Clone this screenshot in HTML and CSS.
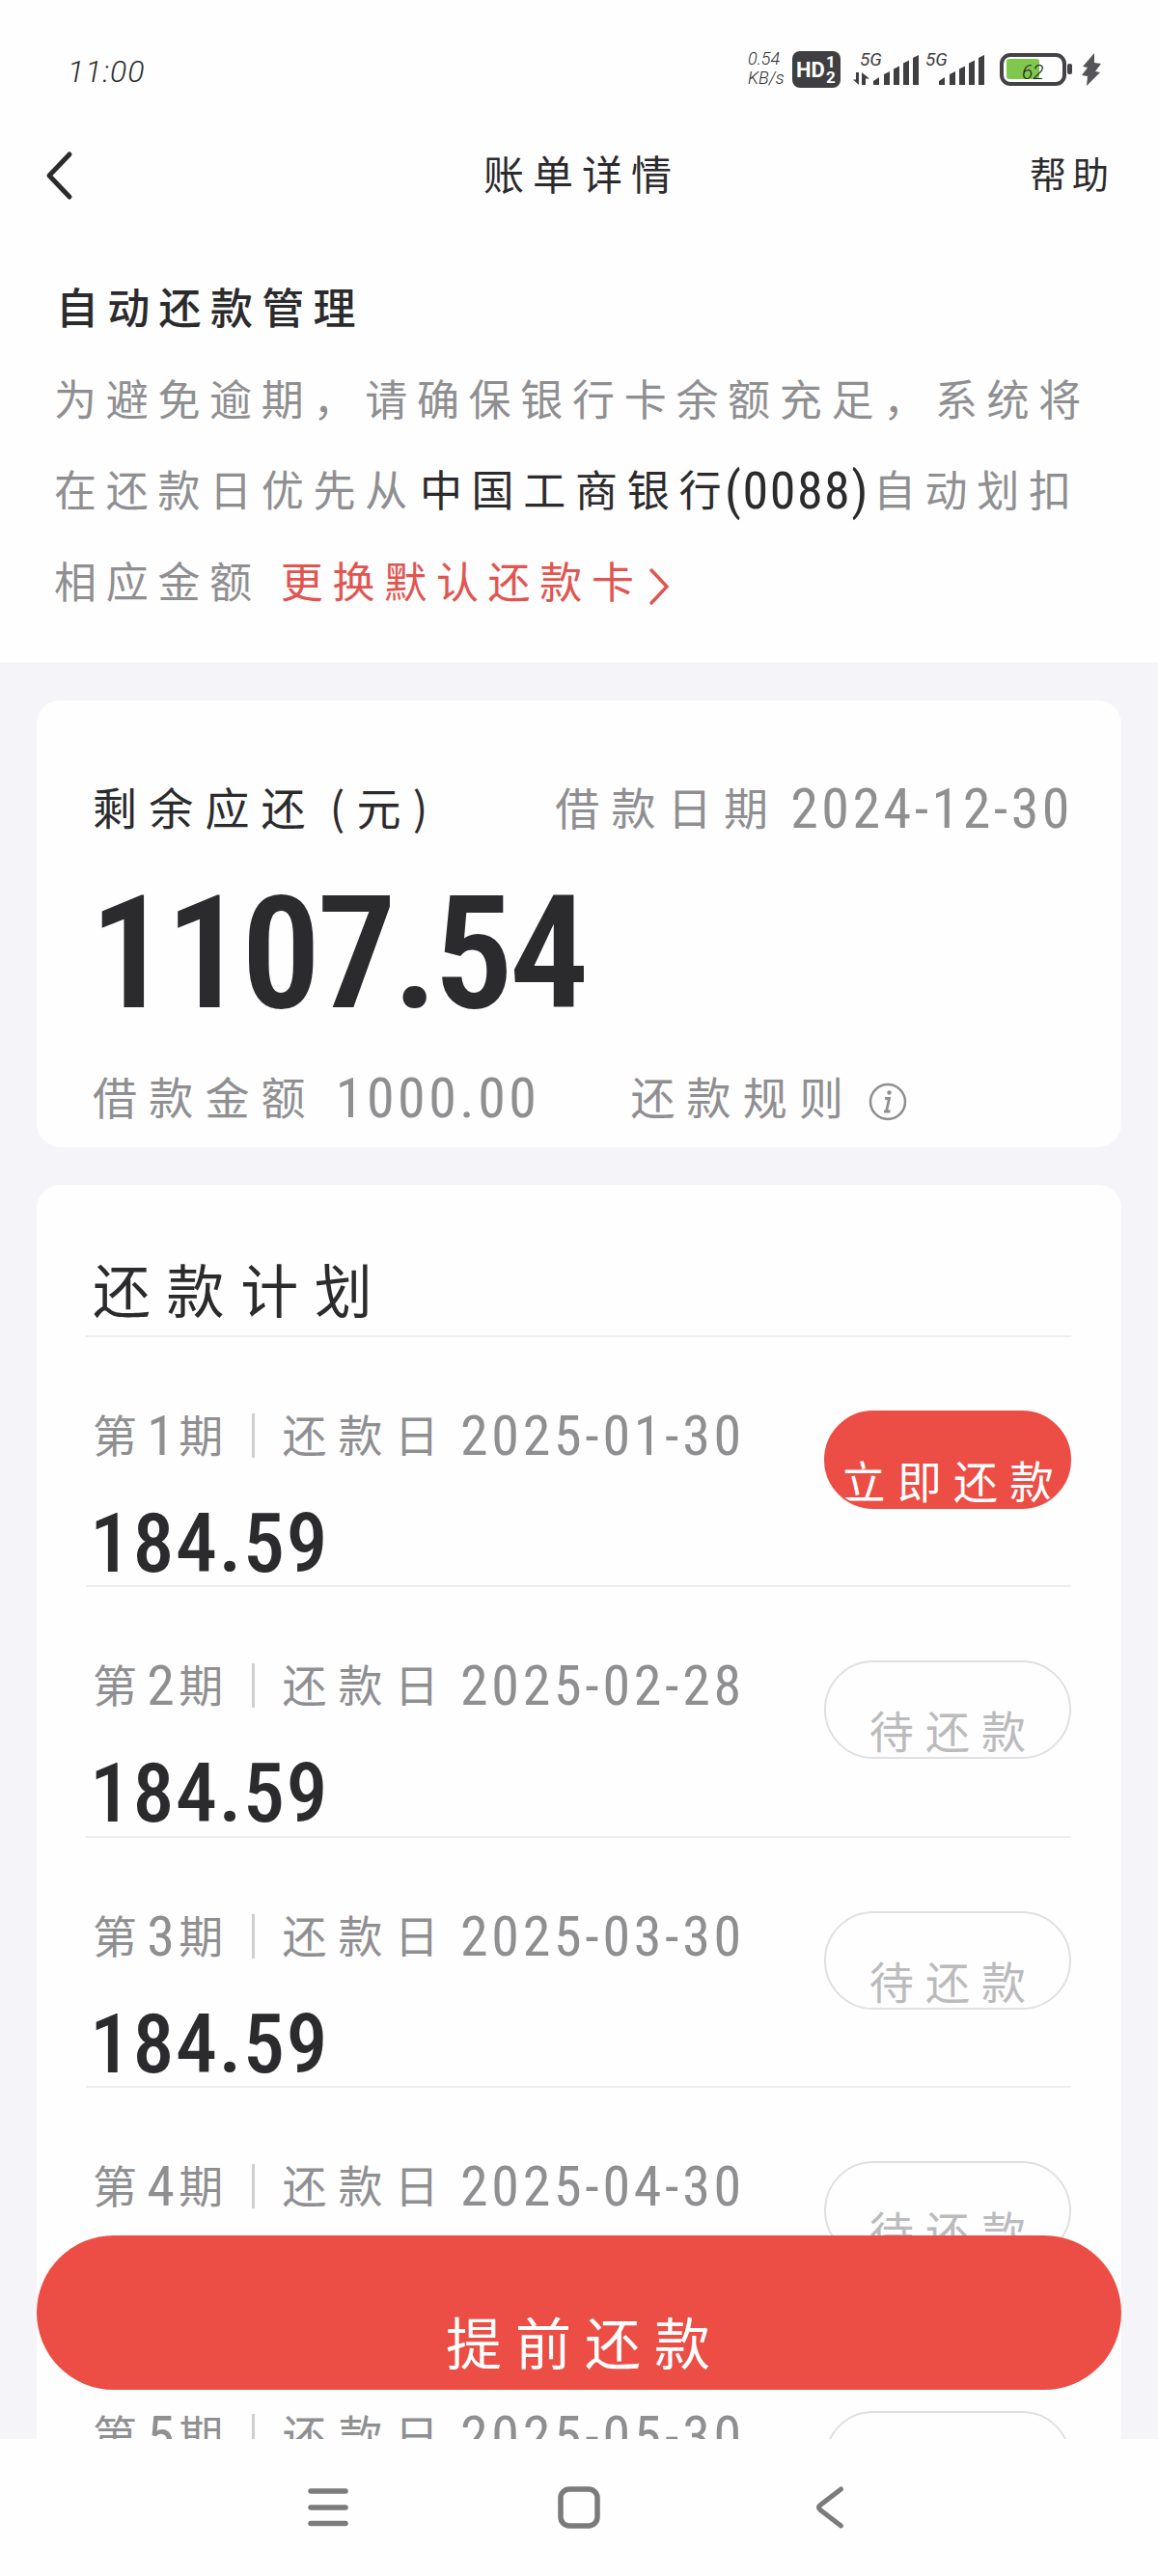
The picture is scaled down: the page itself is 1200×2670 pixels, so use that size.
FILE: index.html
```html
<!DOCTYPE html>
<html lang="zh-CN">
<head>
    <meta charset="UTF-8">
    <title>账单详情</title>
    <link rel="stylesheet" href="styles.css">
</head>
<body>

    <div class="screen">
        <div class="status-bar">
            <div class="time">11:00</div>
            <div class="speed"><span>0.54</span><span>KB/s</span></div>
            <div class="hd-badge">
                <span class="hd-text">HD</span>
                <span class="hd-sims"><span>1</span><span>2</span></span>
            </div>
            <svg class="signals" width="141" height="38" viewBox="0 0 141 38">
                <g fill="#3f3f41">
                    <path d="M3 22h3v13L0 29.500h3zM9 35V22l8 6.500h-4V35z"/>
                    <path d="M21 35v-4l6-4v8zM32 35V24l6-3v14zM42 35V18.500l6-3V35zM52 35V12.500l6-3V35zM62 35V7l6-3v31z"/>
                    <path d="M89 35v-4l6-4v8zM100 35V24l6-3v14zM110 35V18.500l6-3V35zM120 35V12.500l6-3V35zM130 35V7l6-3v31z"/>
                    <text class="net" x="7" y="15">5G</text>
                    <text class="net" x="75" y="15">5G</text>
                </g>
            </svg>
            <svg class="battery" width="76" height="36" viewBox="0 0 76 36">
                <rect x="2" y="3" width="65" height="30" rx="9" fill="none" stroke="#454247" stroke-width="4"/>
                <rect x="7" y="7" width="34" height="21" rx="3" fill="#7fc74d"/>
                <rect x="70" y="12" width="5" height="11" rx="2" fill="#454247"/>
                <text class="level" x="23" y="28">62</text>
            </svg>
            <svg class="bolt" width="22" height="36" viewBox="0 0 22 36">
                <path d="M14 1 2 15l5 1-6 8 6 1-1 10L20 21l-5-1 6-8-7-1z" fill="#555557"/>
            </svg>
        </div>

        <div class="header">
            <svg class="back" width="30" height="52" viewBox="0 0 30 52">
                <path d="M25 4 4 26l21 22" fill="none" stroke="#2b2b2d" stroke-width="5" stroke-linecap="round" stroke-linejoin="round"/>
            </svg>
            <h1 class="page-title">账单详情</h1>
            <a class="help">帮助</a>
        </div>

        <div class="auto-pay">
            <h2>自动还款管理</h2>
            <p>为避免逾期，请确保银行卡余额充足，系统将<br>在还款日优先从<b>中国工商银行<span class="card-no">(0088)</span></b>自动划扣<br>相应金额<a class="change-card">更换默认还款卡<svg width="22" height="40" viewBox="0 0 22 40"><path d="M3 3l16 17L3 37" fill="none" stroke="#e15550" stroke-width="3.500" stroke-linecap="round"/></svg></a></p>
        </div>

        <div class="content">
            <div class="card summary">
                <div class="summary-top">
                    <span class="label dark">剩余应还<span class="unit">(元)</span></span>
                    <span class="label">借款日期<span class="num loan-date">2024-12-30</span></span>
                </div>
                <div class="total">1107.54</div>
                <div class="summary-bottom">
                    <span class="label">借款金额<span class="num loan">1000.00</span></span>
                    <span class="label rule">还款规则</span>
                    <svg class="info" width="42" height="42" viewBox="0 0 42 42">
                        <circle cx="21" cy="21" r="18" fill="none" stroke="#8f8f92" stroke-width="2.500"/>
                        <circle cx="22.500" cy="11.500" r="2.200" fill="#8f8f92"/>
                        <path d="M18 17.500h4.500l-3 13.500h4M17 31h3" fill="none" stroke="#8f8f92" stroke-width="2.800"/>
                    </svg>
                </div>
            </div>

            <div class="card plan">
                <h2>还款计划</h2>
                <div id="planList"></div>
            </div>

            <button class="prepay">提前还款</button>
        </div>

        <div class="nav-bar">
            <svg width="48" height="48" viewBox="0 0 48 48">
                <path d="M6 7h36M6 24h36M6 40.500h36" stroke="#7b7b7b" stroke-width="5.500" stroke-linecap="round"/>
            </svg>
            <svg width="48" height="48" viewBox="0 0 48 48">
                <rect x="5" y="5" width="38" height="38" rx="9" fill="none" stroke="#7b7b7b" stroke-width="5.500"/>
            </svg>
            <svg width="48" height="48" viewBox="0 0 48 48">
                <path d="M35.500 5 14 21.500q-3 2.500 0 5L35.500 43" fill="none" stroke="#7b7b7b" stroke-width="5" stroke-linecap="round"/>
            </svg>
        </div>
    </div>

    <script>
        const plan = [
            { date: '2025-01-30', amount: '184.59', due: true },
            { date: '2025-02-28', amount: '184.59' },
            { date: '2025-03-30', amount: '184.59' },
            { date: '2025-04-30', amount: '184.59' },
            { date: '2025-05-30', amount: '184.59' }
        ];

        function renderPlan() {
            const list = document.getElementById('planList');
            plan.forEach((item, index) => {
                const row = document.createElement('div');
                row.className = 'plan-row';
                row.innerHTML = `
                    <div class="plan-info">
                        <div class="label">第<span class="num period">${index + 1}</span>期<i class="bar"></i>还款日<span class="num date">${item.date}</span></div>
                        <div class="amount">${item.amount}</div>
                    </div>
                    <button class="pay ${item.due ? 'pay-now' : ''}">${item.due ? '立即还款' : '待还款'}</button>
                `;
                list.appendChild(row);
            });
        }

        renderPlan();
    </script>

</body>
</html>
```
FILE: styles.css
```css
* {
    box-sizing: border-box;
}

body {
    margin: 0;
    font-family: "Noto Sans CJK SC", sans-serif;
    background-color: #fefefe;
}

h1,
h2,
p {
    margin: 0;
    font-weight: 400;
}

button {
    border: none;
    font-family: inherit;
    white-space: nowrap;
}

svg {
    display: block;
    flex: none;
    overflow: visible;
}

.screen {
    width: 1200px;
    height: 2670px;
    display: flex;
    flex-direction: column;
    overflow: hidden;
    color: #2b2b2d;
}

/* status bar */
.status-bar {
    height: 130px;
    padding: 14px 58px 0 70px;
    display: flex;
    align-items: center;
    flex: none;
    font-family: Roboto, sans-serif;
}

.time {
    flex: 1;
    padding-top: 4px;
    font-size: 32px;
    font-weight: 300;
    font-style: italic;
    letter-spacing: 1px;
}

.speed {
    display: flex;
    flex-direction: column;
    width: 46px;
    padding-bottom: 3px;
    font-size: 18px;
    font-style: italic;
    font-weight: 300;
    line-height: 20px;
}

.hd-badge {
    display: flex;
    align-items: center;
    width: 50px;
    height: 38px;
    margin: 0 13px 0 0;
    padding-left: 4px;
    border-radius: 8px;
    background-color: #3f3f41;
    color: white;
    font-weight: 700;
}

.hd-text {
    width: 31px;
    font-size: 22px;
}

.hd-sims {
    display: flex;
    flex-direction: column;
    font-size: 17px;
    line-height: 16px;
}

.signals {
    margin-right: 11px;
}

.net {
    font-size: 19px;
    font-style: italic;
}

.battery {
    margin-right: 8px;
}

.level {
    font-size: 21px;
    font-style: italic;
    font-weight: 300;
    fill: #222;
}

/* page header */
.header {
    height: 104px;
    padding: 0 45px 0 47px;
    display: flex;
    align-items: center;
    justify-content: space-between;
    flex: none;
}

.page-title {
    padding: 0 0 8px 62px;
    font-size: 42px;
    letter-spacing: 9px;
}

.help {
    padding-bottom: 8px;
    font-size: 38px;
    letter-spacing: 6px;
}

/* auto repayment notice */
.auto-pay {
    height: 453px;
    padding: 36px 0 0 56px;
    flex: none;
    font-size: 44px;
    letter-spacing: 9.700px;
    line-height: 94.500px;
    white-space: nowrap;
}

.auto-pay h2 {
    padding-left: 2px;
    font-size: 44px;
    font-weight: 500;
    letter-spacing: 9.300px;
}

.auto-pay p {
    color: #8f8f92;
}

.auto-pay b {
    margin-left: 3px;
    font-weight: 400;
    color: #2b2b2d;
}

.card-no {
    margin: 0 4px 0 -6px;
    font-family: Roboto, sans-serif;
    font-size: 54px;
    font-stretch: 75%;
    letter-spacing: 1.500px;
    line-height: 1;
    vertical-align: -2px;
}

.change-card {
    margin-left: 20px;
    color: #e15550;
}

.change-card svg {
    display: inline-block;
    vertical-align: -8px;
    margin-left: 5px;
}

/* cards */
.content {
    position: relative;
    flex: 1;
    min-height: 0;
    overflow: hidden;
    padding: 39px 38px 0;
    background-color: #f4f4f9;
}

.card {
    border-radius: 24px;
    background-color: #fefefe;
    padding: 0 52px 0 58px;
}

.label {
    display: flex;
    align-items: center;
    height: 54px;
    margin-bottom: 6px;
    font-size: 46px;
    letter-spacing: 12.200px;
    line-height: 60px;
    color: #8f8f92;
    white-space: nowrap;
}

.dark {
    color: #2b2b2d;
}

.num,
.total,
.amount {
    font-family: Roboto, sans-serif;
    font-stretch: 75%;
}

.num {
    padding-top: 6px;
    font-size: 58px;
    font-weight: 400;
    letter-spacing: 3.500px;
}

.date {
    margin-left: 10px;
    letter-spacing: 3.700px;
}

.loan-date {
    margin: 0 -2px 0 11px;
}

.summary {
    height: 463px;
    padding-top: 82px;
    margin-bottom: 39px;
}

.summary-top {
    display: flex;
    justify-content: space-between;
}

.unit {
    margin-left: 13px;
}

.total {
    height: 240px;
    margin-left: -3px;
    font-size: 164px;
    font-weight: 600;
    letter-spacing: -4px;
    line-height: 240px;
}

.summary-bottom {
    display: flex;
    align-items: center;
}

.loan {
    margin-left: 19px;
}

.rule {
    margin-left: 94px;
    margin-right: 13px;
}

.info {
    margin-top: 8px;
}

.plan h2 {
    height: 158px;
    margin-left: -7px;
    padding: 60px 0 0 7px;
    border-bottom: 2px solid #eeeeef;
    font-size: 60px;
    letter-spacing: 16.600px;
    line-height: 94px;
}

.plan-row {
    display: flex;
    justify-content: space-between;
    height: 259.300px;
    margin-left: -7px;
    padding: 72px 0 0 7px;
    border-bottom: 2px solid #eeeeef;
}

.period {
    width: 33px;
    margin-left: -2px;
}

.bar {
    width: 3px;
    height: 46px;
    margin: 6px 28px 0 18px;
    background-color: #cfcfd1;
}

.amount {
    margin: 45px 0 0 -3px;
    height: 80px;
    font-size: 86px;
    font-weight: 500;
    letter-spacing: 1.500px;
    line-height: 86px;
}

.pay {
    width: 256px;
    height: 102px;
    margin-top: 4px;
    padding: 40px 0 0 12px;
    overflow: hidden;
    border: 2px solid #e0e0e2;
    border-radius: 51px;
    background-color: #fefefe;
    color: #bbbbbd;
    font-size: 46px;
    letter-spacing: 12.200px;
    line-height: 56px;
}

.pay-now {
    border-color: #ec4d44;
    background-color: #ec4d44;
    color: #fff;
}

/* floats above the plan list */
.prepay {
    position: absolute;
    left: 38px;
    right: 38px;
    bottom: 51px;
    height: 160px;
    padding: 58px 0 0 12px;
    border-radius: 80px;
    background-color: #ec4d44;
    color: #fff;
    font-size: 58px;
    letter-spacing: 14px;
    line-height: 90px;
}

.nav-bar {
    height: 142px;
    flex: none;
    display: flex;
    align-items: center;
    justify-content: center;
    gap: 212px;
}
```
